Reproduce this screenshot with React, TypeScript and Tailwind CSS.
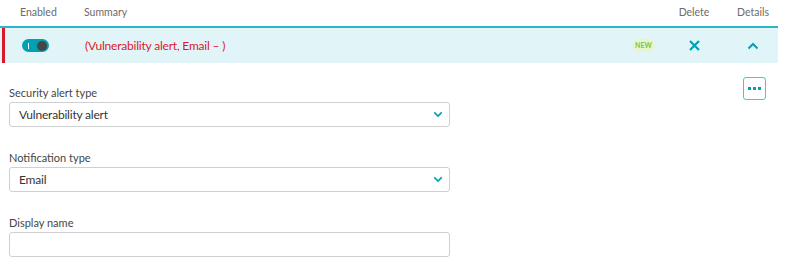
import React from "react";

function Chevron({ up = false, w = 12, h = 8 }: { up?: boolean; w?: number; h?: number }) {
  return (
    <svg width={w} height={h} viewBox="0 0 12 8" className={up ? "rotate-180" : ""}>
      <path d="M1.5 1.5 L6 6 L10.5 1.5" fill="none" stroke="#00a1b2" strokeWidth="2" />
    </svg>
  );
}

function Field({ label, value, select = true }: { label: string; value?: string; select?: boolean }) {
  return (
    <div className="flex flex-col">
      <div className="text-[11px] leading-[14px] text-[#454646] mb-[2px]">{label}</div>
      <div className="w-[441px] h-[25px] border border-[#cfd0d1] rounded-[3px] bg-white flex items-center pl-[9px] pr-[6px] justify-between">
        <span className="text-[12px] tracking-[-0.2px] text-[#353535]">{value}</span>
        {select && <Chevron w={10} h={7} />}
      </div>
    </div>
  );
}

export default function App() {
  return (
    <div className="w-[786px] h-[272px] bg-white overflow-hidden" style={{ fontFamily: "Lato, 'Open Sans', sans-serif" }}>
      <div className="w-[778px]">
        <div className="h-[26px] flex items-center text-[10.5px] text-[#6b6b6b]">
          <div className="w-[84px] pl-[20px]">Enabled</div>
          <div className="flex-1">Summary</div>
          <div className="w-[68px] text-center">Delete</div>
          <div className="w-[50px] text-center">Details</div>
        </div>
        <div className="h-[2px] bg-[#2ab6c2]"></div>
        <div className="h-[35px] bg-[#e1f5f9] flex items-center">
          <div className="w-[3px] h-[35px] bg-[#dc172a] ml-[2px]"></div>
          <div className="w-[80px] pl-[17px]">
            <div className="w-[27px] h-[13px] rounded-full bg-[#00a1b2] flex items-center justify-between px-[2px]">
              <div className="w-[1px] h-[6px] bg-white ml-[4px]"></div>
              <div className="w-[10px] h-[10px] rounded-full bg-[#454646]"></div>
            </div>
          </div>
          <div className="flex-1 text-[12px] tracking-[-0.2px] text-[#dc172a]">(Vulnerability alert, Email – )</div>
          <div className="w-[23px] h-[13px] rounded-full bg-[#e6f5d0] text-[7px] font-bold text-[#7dc540] flex items-center justify-center mr-[5px]">NEW</div>
          <div className="w-[68px] flex justify-center">
            <svg width="11" height="11" viewBox="0 0 11 11">
              <path d="M1 1 L10 10 M10 1 L1 10" stroke="#00a1b2" strokeWidth="2.2" />
            </svg>
          </div>
          <div className="w-[50px] flex justify-center">
            <Chevron up />
          </div>
        </div>
      </div>
      <div className="flex justify-between pl-[9px] pr-[20px]">
        <div className="flex flex-col gap-[24px] pt-[23px]">
          <Field label="Security alert type" value="Vulnerability alert" />
          <Field label="Notification type" value="Email" />
          <Field label="Display name" select={false} />
        </div>
        <div className="pt-[14px]">
          <div className="w-[23px] h-[23px] border border-[#4fc3cf] rounded-[3px] flex items-center justify-center gap-[2px]">
            <div className="w-[3px] h-[3px] bg-[#00a1b2]"></div>
            <div className="w-[3px] h-[3px] bg-[#00a1b2]"></div>
            <div className="w-[3px] h-[3px] bg-[#00a1b2]"></div>
          </div>
        </div>
      </div>
    </div>
  );
}
